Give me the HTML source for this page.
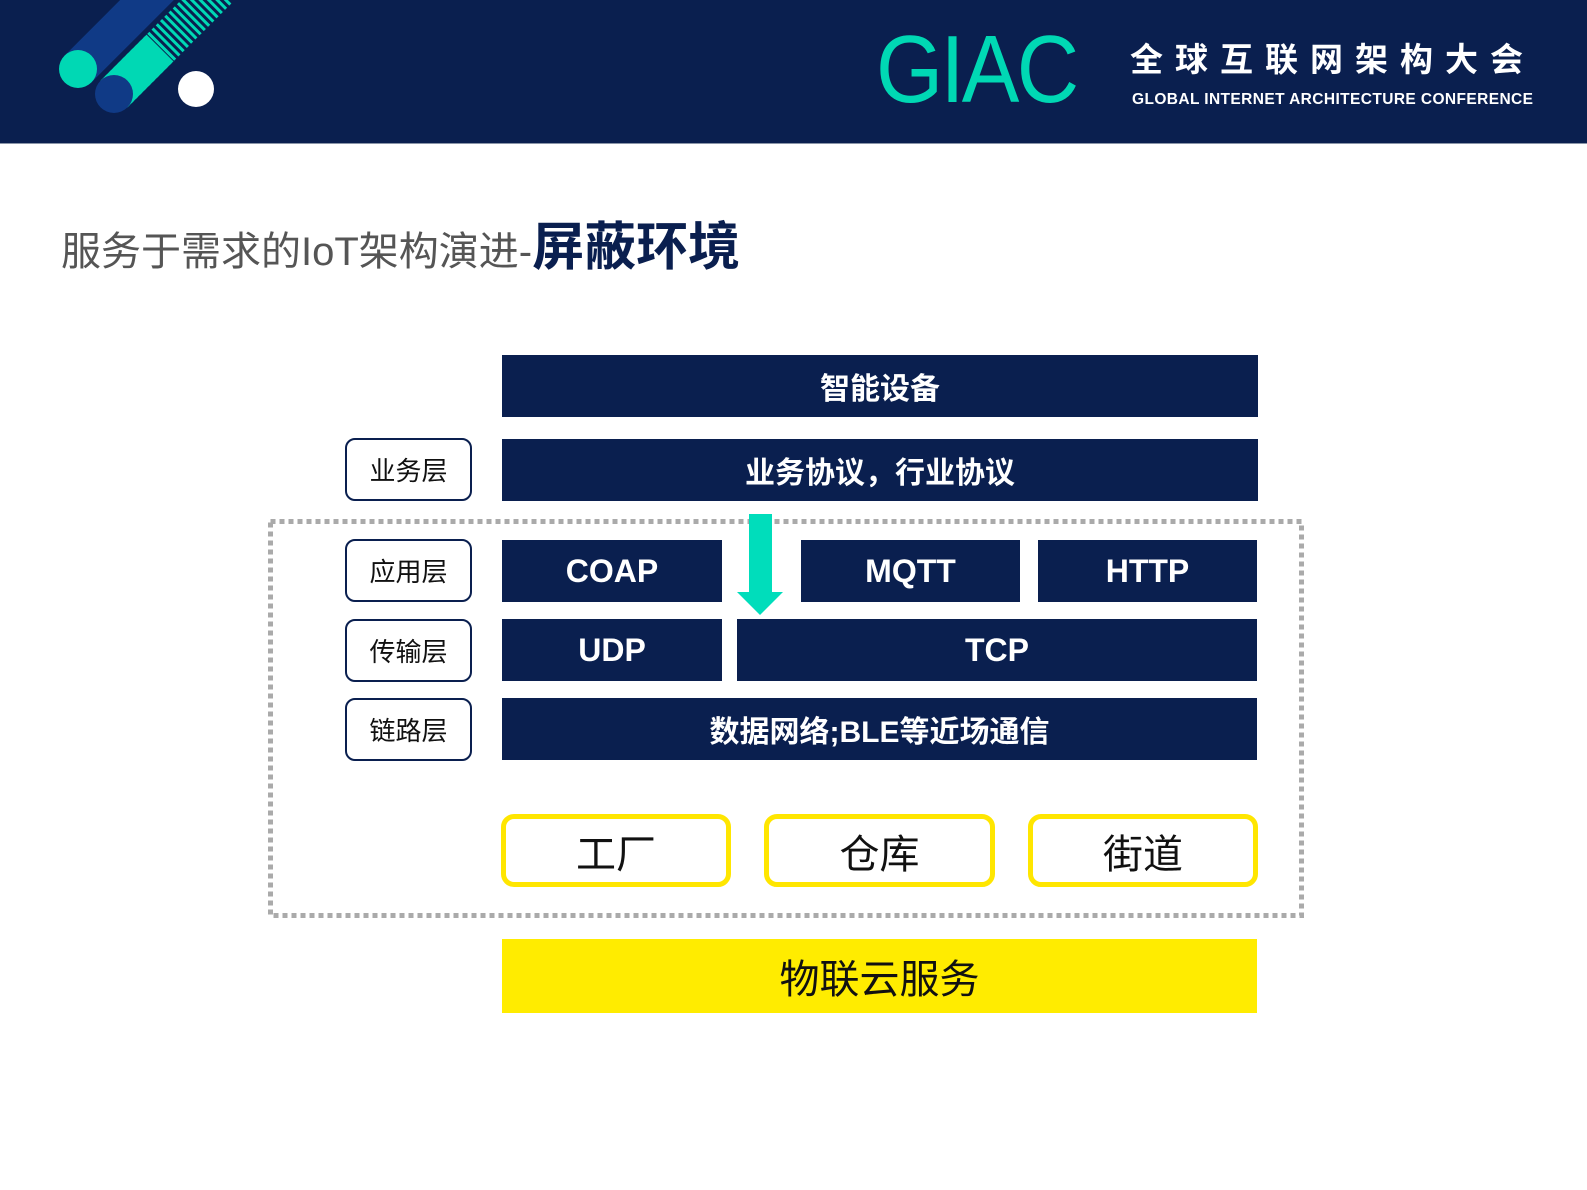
<!DOCTYPE html>
<html><head><meta charset="utf-8"><style>
*{margin:0;padding:0;box-sizing:border-box}
body{width:1587px;height:1190px;background:#fff;position:relative;overflow:hidden;font-family:"Liberation Sans","Noto Sans CJK SC",sans-serif}
.hd{position:absolute;left:0;top:0;width:1587px;height:144px;background:#0a1f4f;border-bottom:1px solid #8a95a8}
.a{position:absolute}
.nb{position:absolute;background:#0a1f4f;color:#fff;font-weight:bold;display:flex;align-items:center;justify-content:center;font-size:30px}
.lb{position:absolute;left:345px;width:127px;height:63px;border:2.5px solid #0a1f4f;border-radius:10px;display:flex;align-items:center;justify-content:center;font-size:26px;color:#111}
.yb{position:absolute;border:5px solid #ffe600;border-radius:13px;display:flex;align-items:center;justify-content:center;font-size:40px;color:#111;height:73px;top:814px}
</style></head><body>
<div class="hd">
<svg class="a" style="left:0;top:0" width="300" height="144" viewBox="0 0 300 144">
<line x1="78" y1="69" x2="170" y2="-23" stroke="#103a86" stroke-width="38"/>
<line x1="114" y1="94" x2="220" y2="-12" stroke="#00d8b4" stroke-width="38" stroke-dasharray="3 3" />
<line x1="114" y1="94" x2="160" y2="48" stroke="#00d8b4" stroke-width="38"/>
<circle cx="78" cy="69" r="19" fill="#00d8b4"/>
<circle cx="114" cy="94" r="19" fill="#103a86"/>
<circle cx="196" cy="89" r="18" fill="#fff"/>
</svg>
<div class="a" style="left:876px;top:20px;font-size:96px;color:#00d8b4;letter-spacing:-3px;line-height:100px;transform:scaleX(0.9);transform-origin:0 0">GIAC</div>
<div class="a" style="left:1130px;top:40px;font-size:33px;color:#fff;font-weight:bold;letter-spacing:12px;line-height:40px;white-space:nowrap">全球互联网架构大会</div>
<div class="a" style="left:1132px;top:91px;font-size:15.5px;color:#fff;font-weight:bold;line-height:18px;white-space:nowrap;letter-spacing:0.4px">GLOBAL INTERNET ARCHITECTURE CONFERENCE</div>
</div>
<div class="a" style="left:61px;top:222px;font-size:40px;color:#555;white-space:nowrap;line-height:52px">服务于需求的IoT架构演进-<span style="font-size:52px;font-weight:bold;color:#0a1f4f">屏蔽环境</span></div>

<svg class="a" style="left:268px;top:519px" width="1037" height="400"><rect x="2.5" y="2.5" width="1031" height="394" fill="none" stroke="#aaa" stroke-width="5" stroke-dasharray="5 4"/></svg>

<div class="nb" style="left:502px;top:355px;width:756px;height:62px">智能设备</div>
<div class="nb" style="left:502px;top:439px;width:756px;height:62px">业务协议，行业协议</div>
<div class="nb" style="left:502px;top:540px;width:220px;height:62px;font-size:32px">COAP</div>
<div class="nb" style="left:801px;top:540px;width:219px;height:62px;font-size:32px">MQTT</div>
<div class="nb" style="left:1038px;top:540px;width:219px;height:62px;font-size:32px">HTTP</div>
<div class="nb" style="left:502px;top:619px;width:220px;height:62px;font-size:32px">UDP</div>
<div class="nb" style="left:737px;top:619px;width:520px;height:62px;font-size:32px">TCP</div>
<div class="nb" style="left:502px;top:698px;width:755px;height:62px">数据网络;BLE等近场通信</div>

<svg class="a" style="left:737px;top:514px" width="46" height="102"><rect x="12" y="0" width="23" height="79" fill="#00ddbb"/><polygon points="0,78 46,78 23,101" fill="#00ddbb"/></svg>

<div class="lb" style="top:438px">业务层</div>
<div class="lb" style="top:539px">应用层</div>
<div class="lb" style="top:619px">传输层</div>
<div class="lb" style="top:698px">链路层</div>

<div class="yb" style="left:501px;width:230px">工厂</div>
<div class="yb" style="left:764px;width:231px">仓库</div>
<div class="yb" style="left:1028px;width:230px">街道</div>

<div class="a" style="left:502px;top:939px;width:755px;height:74px;background:#ffec00;display:flex;align-items:center;justify-content:center;font-size:40px;color:#111">物联云服务</div>
</body></html>
